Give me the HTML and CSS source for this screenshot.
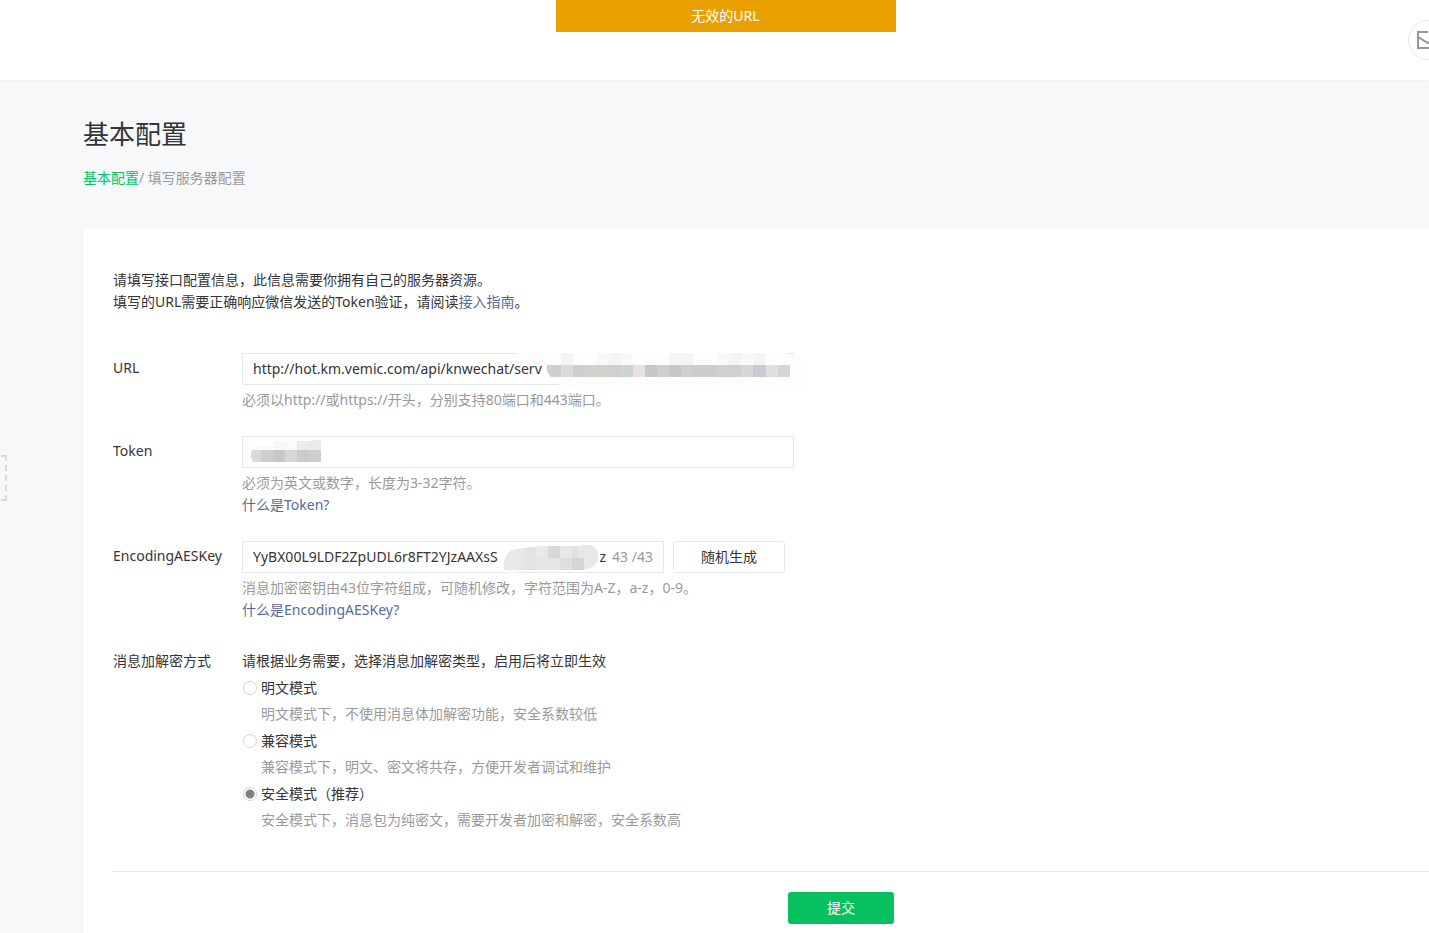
FILE: index.html
```
<!DOCTYPE html>
<html lang="zh-CN">
<head>
<meta charset="utf-8">
<title>基本配置</title>
<link rel="stylesheet" href="styles.css">
</head>
<body>
<header class="header">
  <div class="toast" role="alert">无效的URL</div>
  <button class="mail" type="button" aria-label="消息">
    <svg width="22" height="20" viewBox="0 0 22 20" fill="none" stroke="#969696"><path d="M11 2H1v16h20V2h-7" stroke-width="2"/><path d="M1 7l10 6 10-6" stroke-width="2"/></svg>
  </button>
</header>
<svg class="side-handle" width="7" height="46" viewBox="0 0 7 46" fill="#d9dadc" aria-hidden="true"><path d="M1 0h6v6H5V2H1zM5 10h2v6H5zM5 20h2v6H5zM5 30h2v6H5zM5 40h2v6H1v-2h4z"/></svg>
<main class="main">
  <h1 class="title">基本配置</h1>
  <nav class="crumbs"><a class="crumb-link" href="#">基本配置</a>/ 填写服务器配置</nav>
  <form class="card">
    <div class="intro">
      <p>请填写接口配置信息，此信息需要你拥有自己的服务器资源。</p>
      <p>填写的URL需要正确响应微信发送的Token验证，请阅读<a class="link" href="#">接入指南</a>。</p>
    </div>
    <div class="row">
      <label class="label" for="url">URL</label>
      <div class="control">
        <div class="field">
          <input class="input" id="url" type="text" value="http://hot.km.vemic.com/api/knwechat/serv">
          <svg class="mask mask-url" width="286" height="40" viewBox="0 0 286 40" aria-hidden="true">
            <path fill="#fdfdfd" d="M0 0h271v3h14v33H94l-1 2H60Q52 33 40 31L34 12H8z"/>
            <path fill="#f4f4f4" d="M45 0h12v12H45zM93 0h12v12H93zM153 0h24v12h-24zM213 0h12v12h-12zM237 0h12v12h-12z"/>
            <path fill="#f9f9f9" d="M81 0h12v12H81zM105 0h12v12h-12zM201 0h12v12h-12zM225 0h12v12h-12z"/>
            <path fill="#cdcfd2" d="M31 12h14v12H35q-6-6-4-12z"/>
            <path fill="#dcdbda" d="M45 12h12v12H45z"/><path fill="#cfcfce" d="M57 12h12v12H57z"/>
            <path fill="#d2d1cd" d="M69 12h24v12H69z"/><path fill="#cdd0cf" d="M93 12h12v12H93z"/>
            <path fill="#ccd4d2" d="M105 12h12v12h-12z"/><path fill="#e7e3df" d="M117 12h12v12h-12z"/>
            <path fill="#c7c8ca" d="M129 12h12v12h-12zM153 12h12v12h-12z"/><path fill="#cfd0d2" d="M141 12h12v12h-12z"/>
            <path fill="#d0d1cc" d="M165 12h12v12h-12z"/><path fill="#cdcdd0" d="M177 12h24v12h-24z"/>
            <path fill="#d1cfd2" d="M201 12h12v12h-12z"/><path fill="#d0d0ce" d="M213 12h12v12h-12z"/>
            <path fill="#d9d5d2" d="M225 12h12v12h-12z"/><path fill="#c9cad1" d="M237 12h12v12h-12z"/>
            <path fill="#d0cecf" d="M249 12h6v12h-6z"/><path fill="#dfdfe2" d="M250 12h12v12h-12z"/>
            <path fill="#d3d7dc" d="M262 12h12v12h-12z"/>
          </svg>
        </div>
        <p class="hint">必须以http://或https://开头，分别支持80端口和443端口。</p>
      </div>
    </div>
    <div class="row">
      <label class="label" for="token">Token</label>
      <div class="control">
        <div class="field">
          <input class="input" id="token" type="text">
          <svg class="mask mask-token" width="72" height="24" viewBox="0 0 72 24" aria-hidden="true">
            <path fill="#f8f8f6" d="M22 2h12v9H22z"/><path fill="#fafafa" d="M34 2h12v9H34zM4 7h18v4H4z"/>
            <path fill="#eaebeb" d="M46 2h12v9H46z"/><path fill="#e9ebeb" d="M58 2q6-2 12-1v10H58z"/>
            <path fill="#d9d9d8" d="M1 11h9v12H2q-4-6-1-12z"/><path fill="#cdcfd1" d="M10 11h12v12H10z"/>
            <path fill="#c9c8c4" d="M22 11h12v12H22z"/><path fill="#d6d7d9" d="M34 11h12v12H34z"/>
            <path fill="#cacbcc" d="M46 11h12v12H46z"/><path fill="#cdcecf" d="M58 11h12v12H58z"/>
          </svg>
        </div>
        <p class="hint">必须为英文或数字，长度为3-32字符。</p>
        <p class="hint"><a class="link" href="#">什么是Token?</a></p>
      </div>
    </div>
    <div class="row">
      <label class="label" for="aes">EncodingAESKey</label>
      <div class="control">
        <div class="key-line">
          <div class="field field-key">
            <input class="input" id="aes" type="text" value="YyBX00L9LDF2ZpUDL6r8FT2YJzAAXsS                            z">
            <span class="count">43 /43</span>
            <svg class="mask mask-key" width="98" height="30" viewBox="0 0 98 30" aria-hidden="true">
              <path fill="#fafafa" d="M2 22h22q-6 6-16 6-6 0-6-6z"/>
              <path fill="#e8e8e8" d="M9 5Q30 1 46 1h29q17-4 20 6 2 12-8 16-4 2-12 2H1Q-1 11 9 5z"/>
              <path fill="#e3e3e2" d="M21 3h12v22H21z"/><path fill="#e5e5e4" d="M33 13h24v12H33z"/>
              <path fill="#d9d8d8" d="M45 1h12v12H45z"/><path fill="#dfdfdf" d="M57 13h12v12H57z"/>
              <path fill="#d6d6d7" d="M69 13h12v12H69z"/><path fill="#e1e1e1" d="M69 1h6v12h-6z"/>
            </svg>
          </div>
          <button class="btn btn-plain" type="button">随机生成</button>
        </div>
        <p class="hint">消息加密密钥由43位字符组成，可随机修改，字符范围为A-Z，a-z，0-9。</p>
        <p class="hint"><a class="link" href="#">什么是EncodingAESKey?</a></p>
      </div>
    </div>
    <fieldset class="row row-modes">
      <legend class="label legend">消息加解密方式</legend>
      <div class="control modes">
        <p class="lead">请根据业务需要，选择消息加解密类型，启用后将立即生效</p>
        <div class="mode">
          <label class="option"><input class="radio" type="radio" name="mode">明文模式</label>
          <p class="desc">明文模式下，不使用消息体加解密功能，安全系数较低</p>
        </div>
        <div class="mode">
          <label class="option"><input class="radio" type="radio" name="mode">兼容模式</label>
          <p class="desc">兼容模式下，明文、密文将共存，方便开发者调试和维护</p>
        </div>
        <div class="mode">
          <label class="option"><input class="radio" type="radio" name="mode" checked>安全模式（推荐）</label>
          <p class="desc">安全模式下，消息包为纯密文，需要开发者加密和解密，安全系数高</p>
        </div>
      </div>
    </fieldset>
    <div class="actions"><button class="btn btn-primary" type="submit">提交</button></div>
  </form>
</main>
</body>
</html>
```
FILE: styles.css
```
* { box-sizing: border-box; }
html { height: 100%; overflow: hidden; }
body {
  margin: 0;
  min-height: 100%;
  overflow: hidden;
  background: #f6f8f9;
  color: #353535;
  font: 14px/22px "Noto Sans", "Noto Sans CJK SC", sans-serif;
}
p, h1 { margin: 0; }
a { text-decoration: none; }
input, button { font: inherit; color: inherit; }

.header {
  position: relative;
  display: flex;
  align-items: center;
  justify-content: flex-end;
  height: 80px;
  background: #fff;
  box-shadow: 0 1px 2px rgba(0, 0, 0, 0.04);
}
.toast {
  position: absolute;
  top: 0;
  left: calc(50% + 11px);
  width: 340px;
  margin-left: -170px;
  background: #eaa000;
  color: #fff;
  line-height: 32px;
  text-align: center;
}
.mail {
  display: flex;
  flex: none;
  align-items: center;
  justify-content: center;
  width: 40px;
  height: 40px;
  margin-right: -19px;
  padding: 0;
  border: 1px solid #e4e8eb;
  border-radius: 50%;
  background: #fff;
}
.side-handle { position: absolute; left: 0; top: 455px; }

.main { padding: 36px 0 0 83px; }
.title { font-size: 26px; line-height: 36px; font-weight: 400; }
.crumbs { margin-top: 15px; color: #9a9a9a; }
.crumb-link { color: #07c160; }

.card {
  margin: 40px -170px 0 0;
  padding: 40px 30px;
  background: #fff;
  box-shadow: 0 1px 2px rgba(0, 0, 0, 0.06);
}
.intro { margin-bottom: 40px; }
.link { color: #576b95; }
.row {
  display: flex;
  min-width: 0;
  margin: 0 0 25px;
  padding: 0;
  border: 0;
}
.row-modes { margin-top: 29px; }
.label { flex: none; width: 129px; padding: 4px 0; }
.legend { float: left; padding: 0; }
.control { width: 552px; }
.field {
  position: relative;
  display: flex;
  align-items: center;
  height: 32px;
  border: 1px solid #e4e8eb;
  background: #fff;
}
.input {
  flex: 1;
  min-width: 0;
  height: 30px;
  padding: 0 10px;
  border: 0;
  outline: 0;
  background: none;
}
.field > .input { padding-bottom: 2px; }
.hint { color: #9a9a9a; }
.field + .hint, .key-line + .hint { margin-top: 4px; }
.mask { position: absolute; pointer-events: none; }
.mask-url { left: 273px; top: -1px; }
.mask-token { left: 8px; top: 2px; }
.mask-key { left: 260px; top: 3px; }
.key-line { display: flex; gap: 9px; }
.field-key { width: 422px; }
.field-key .input { padding-right: 2px; }
.count { padding-right: 10px; color: #9a9a9a; }

.btn { height: 32px; padding: 0; border-radius: 3px; }
.btn-plain { width: 112px; border: 1px solid #e4e8eb; background: #fff; }
.btn-primary { width: 106px; border: 0; background: #07c160; color: #fff; }

.modes { display: grid; gap: 5px; }
.mode { display: grid; gap: 4px; }
.option { display: flex; align-items: center; gap: 4px; }
.radio {
  appearance: none;
  width: 14px;
  height: 14px;
  margin: 0 0 0 1px;
  border: 1px solid #d5d5d5;
  border-radius: 50%;
  background: #fff;
}
.radio:checked { background: radial-gradient(circle, #808080 4px, #fff 5px); }
.desc { padding-left: 19px; color: #9a9a9a; }
.actions {
  margin-top: 40px;
  padding-top: 20px;
  border-top: 1px solid #e7e7eb;
  text-align: center;
}
```
